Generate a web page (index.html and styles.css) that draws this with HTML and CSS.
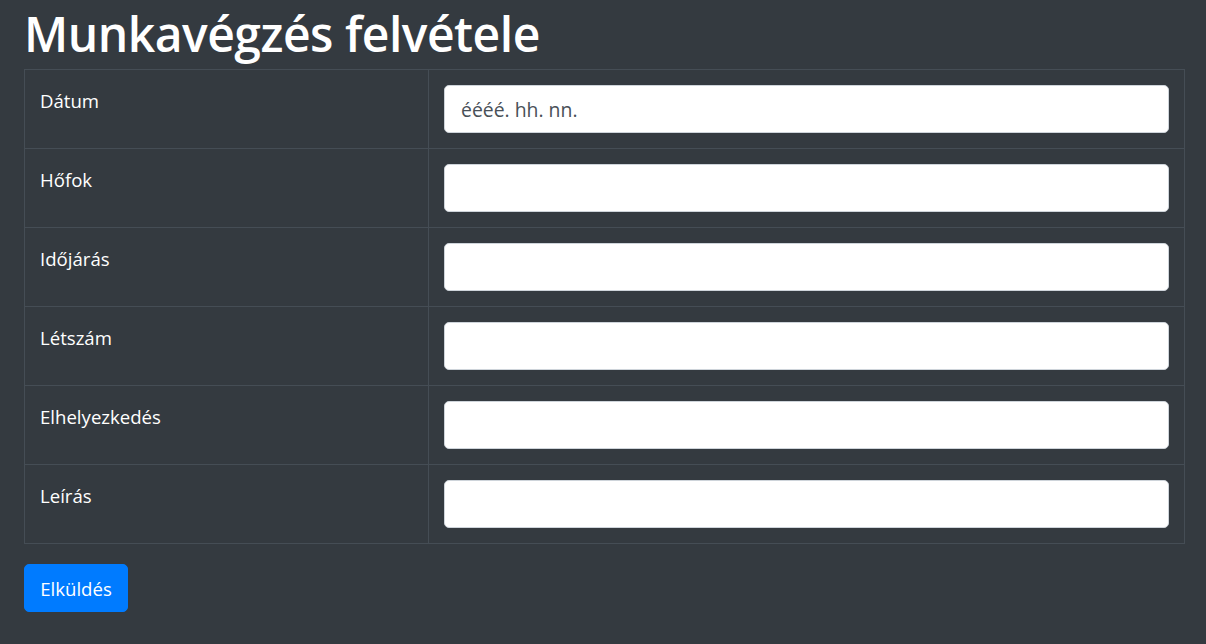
FILE: index.html
```html
<!DOCTYPE html>
<html lang="hu">
<head>
<meta charset="utf-8">
<title>Munkavégzés felvétele</title>
<link rel="stylesheet" href="styles.css">
</head>
<body>
<main class="page">
  <h1 class="title">Munkavégzés felvétele</h1>
  <form class="form">
    <table class="form-table">
      <colgroup><col class="col-label"><col class="col-field"></colgroup>
      <tbody>
        <tr><td class="cell-label">Dátum</td><td class="cell-field"><input class="field" type="text" placeholder="éééé. hh. nn."></td></tr>
        <tr><td class="cell-label">Hőfok</td><td class="cell-field"><input class="field" type="text"></td></tr>
        <tr><td class="cell-label">Időjárás</td><td class="cell-field"><input class="field" type="text"></td></tr>
        <tr><td class="cell-label">Létszám</td><td class="cell-field"><input class="field" type="text"></td></tr>
        <tr><td class="cell-label">Elhelyezkedés</td><td class="cell-field"><input class="field" type="text"></td></tr>
        <tr><td class="cell-label">Leírás</td><td class="cell-field"><input class="field" type="text"></td></tr>
      </tbody>
    </table>
    <button class="btn-submit" type="button">Elküldés</button>
  </form>
</main>
</body>
</html>
```
FILE: styles.css
```css
html, body {
  margin: 0;
  padding: 0;
  background: #343a40;
}
body {
  font-family: "Open Sans", "Noto Sans", sans-serif;
  color: #ffffff;
}
.page {
  padding: 0 21px 0 24px;
}
.title {
  margin: 0;
  font-size: 48px;
  font-weight: 600;
  line-height: 67px;
  height: 69px;
  letter-spacing: -0.5px;
}
.form-table {
  width: 100%;
  border-collapse: collapse;
  table-layout: fixed;
}
.col-label { width: 404px; }
.form-table td {
  border: 1px solid #454d55;
  padding: 15px;
  vertical-align: top;
}
.cell-label {
  font-size: 18.6px;
  line-height: 31px;
  color: #fff;
}
.field {
  display: block;
  box-sizing: border-box;
  width: 100%;
  height: 48px;
  margin: 0;
  padding: 8px 16px;
  border: 1px solid #ced4da;
  border-radius: 5px;
  background: #fff;
  font-family: inherit;
  font-size: 19.4px;
  color: #495057;
  outline: none;
}
.field::placeholder {
  color: #495057;
  opacity: 1;
}
.btn-submit {
  margin-top: 20px;
  width: 104px;
  height: 48px;
  border: 1px solid #007bff;
  border-radius: 5px;
  background: #007bff;
  color: #fff;
  font-family: inherit;
  font-size: 18.6px;
  padding: 0;
  cursor: pointer;
}
```
